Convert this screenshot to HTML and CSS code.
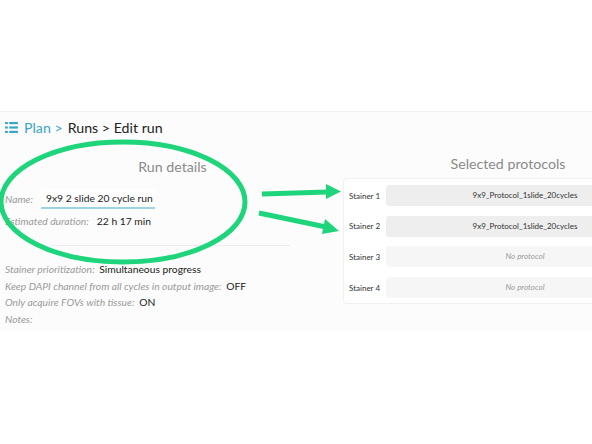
FILE: index.html
```html
<!DOCTYPE html>
<html lang="en">
<head>
  <meta charset="UTF-8">
  <meta name="viewport" content="width=device-width, initial-scale=1.0">
  <title>Edit run</title>
  <link rel="stylesheet" href="styles.css">
</head>
<body>
  <div class="page">
    <nav class="crumbs">
      <svg class="menu-icon" width="13" height="11" viewBox="0 0 14 12">
        <rect x="0" y="0" width="3" height="2.4" fill="#3ba5c5"/>
        <rect x="4.5" y="0" width="9.5" height="2.4" fill="#3ba5c5"/>
        <rect x="0" y="4.8" width="3" height="2.4" fill="#3ba5c5"/>
        <rect x="4.5" y="4.8" width="9.5" height="2.4" fill="#3ba5c5"/>
        <rect x="0" y="9.6" width="3" height="2.4" fill="#3ba5c5"/>
        <rect x="4.5" y="9.6" width="9.5" height="2.4" fill="#3ba5c5"/>
      </svg>
      <span class="link">Plan &gt;</span>
      <span>Runs &gt; Edit run</span>
    </nav>

    <div class="columns">
      <section class="details">
        <h2>Run details</h2>
        <div class="field name">
          <span class="label">Name:</span>
          <span class="input">9x9 2 slide 20 cycle run</span>
        </div>
        <div class="field">
          <span class="label">Estimated duration:</span>
          <span class="value">22 h 17 min</span>
        </div>
        <hr>
        <div class="opts">
          <div><span class="label">Stainer prioritization:</span> <span class="value">Simultaneous progress</span></div>
          <div><span class="label">Keep DAPI channel from all cycles in output image:</span> <span class="value">OFF</span></div>
          <div><span class="label">Only acquire FOVs with tissue:</span> <span class="value">ON</span></div>
          <div><span class="label">Notes:</span></div>
        </div>
      </section>

      <section class="protocols">
        <h2>Selected protocols</h2>
        <div class="card">
          <div class="row"><span class="stainer">Stainer 1</span><span class="proto">9x9_Protocol_1slide_20cycles</span></div>
          <div class="row"><span class="stainer">Stainer 2</span><span class="proto">9x9_Protocol_1slide_20cycles</span></div>
          <div class="row"><span class="stainer">Stainer 3</span><span class="proto empty">No protocol</span></div>
          <div class="row"><span class="stainer">Stainer 4</span><span class="proto empty">No protocol</span></div>
        </div>
      </section>
    </div>

    <!-- green markup drawn on top of the form -->
    <svg class="marks" width="592" height="220" viewBox="0 111 592 220">
      <ellipse cx="123" cy="202" rx="122" ry="60" fill="none" stroke="#1fd57b" stroke-width="5"/>
      <line x1="262" y1="194" x2="328" y2="192" stroke="#1fd57b" stroke-width="5"/>
      <polygon points="326,184 341,191.5 326,199" fill="#1fd57b"/>
      <line x1="259" y1="213" x2="326" y2="227" stroke="#1fd57b" stroke-width="5"/>
      <polygon points="325,219 339,231 322,234" fill="#1fd57b"/>
    </svg>
  </div>
</body>
</html>
```

FILE: styles.css
```css
html, body {
  margin: 0;
  background: #fff;
  overflow: hidden;
}
body {
  font-family: Lato, "Open Sans", sans-serif;
  color: #222;
  width: 592px;
  height: 444px;
}
.page {
  position: relative;
  box-sizing: border-box;
  margin-top: 111px;
  height: 220px;
  width: 592px;
  overflow: hidden;
  background: #fcfcfc;
  border-top: 1px solid #f0f0f0;
}
.crumbs {
  display: flex;
  align-items: center;
  gap: 5px;
  padding: 5px 0 0 5px;
  font-size: 14.2px;
  height: 20px;
}
.menu-icon {
  margin-right: 1px;
}
.link {
  color: #3ba5c5;
}
.columns {
  display: flex;
  width: 700px;
}
h2 {
  margin: 0;
  font-weight: normal;
  font-size: 14.2px;
  color: #8a8a8a;
  text-align: center;
}
.details {
  width: 290px;
  flex-shrink: 0;
  padding-left: 5px;
  font-size: 10.3px;
}
.details h2 {
  margin: 19px 0 11px 45px;
  height: 21px;
  line-height: 21px;
}
.label {
  color: #9a9a9a;
  font-style: italic;
}
.value {
  color: #222;
  margin-left: 2px;
}
.field {
  display: flex;
  align-items: center;
  gap: 6px;
  height: 18px;
}
.field.name {
  height: 22px;
  margin-bottom: 2px;
}
.input {
  background: #fff;
  border-bottom: 2px solid #9ad3e2;
  padding: 3px 2px 3px 5px;
  font-size: 10.3px;
  color: #222;
  margin-left: 2px;
}
hr {
  border: 0;
  border-top: 1px solid #ececec;
  margin: 15px 0 15px 47px;
  width: 238px;
}
.opts div {
  height: 16.7px;
  line-height: 16.7px;
}
.protocols {
  margin-left: 48px;
  width: 330px;
  flex-shrink: 0;
}
.protocols h2 {
  margin: 18px 0 5px;
  height: 18px;
  line-height: 18px;
}
.card {
  background: #fff;
  border: 1px solid #f0f0f0;
  border-radius: 4px;
  padding: 6px 8px 5px 5px;
  display: flex;
  flex-direction: column;
  gap: 9.7px;
}
.row {
  display: flex;
  align-items: center;
  font-size: 8px;
}
.stainer {
  width: 37px;
  color: #333;
}
.proto {
  flex: 1;
  height: 21px;
  line-height: 21px;
  background: #eeeeee;
  border-radius: 3px;
  text-align: center;
  color: #333;
}
.proto.empty {
  background: #f6f6f6;
  color: #9a9a9a;
  font-style: italic;
}
.marks {
  position: absolute;
  left: 0;
  top: -1px;
  pointer-events: none;
}
```
